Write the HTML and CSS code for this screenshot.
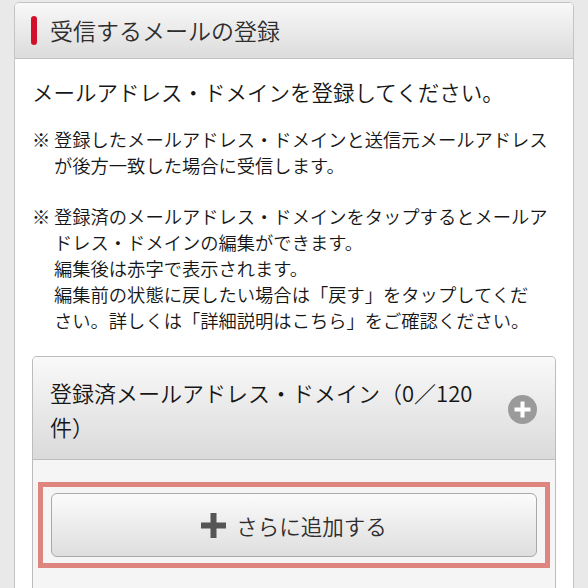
FILE: index.html
```html
<!DOCTYPE html>
<html lang="ja">
<head>
<meta charset="utf-8">
<title>受信するメールの登録</title>
<link rel="stylesheet" href="styles.css">
</head>
<body>
<div class="page">
  <section class="card">
    <header class="card-head">
      <span class="bar"></span>
      <h1 class="title">受信するメールの登録</h1>
    </header>
    <div class="card-body">
      <p class="lead">メールアドレス・ドメインを登録してください。</p>
      <div class="notes">
        <div class="note">
          <span class="mark">※</span>
          <p class="note-text">登録したメールアドレス・ドメインと送信元メールアドレスが後方一致した場合に受信します。</p>
        </div>
        <div class="note">
          <span class="mark">※</span>
          <p class="note-text">登録済のメールアドレス・ドメインをタップするとメールアドレス・ドメインの編集ができます。<br>編集後は赤字で表示されます。<br>編集前の状態に戻したい場合は「戻す」をタップしてくだ<br>さい。詳しくは「詳細説明はこちら」をご確認ください。</p>
        </div>
      </div>
      <div class="box">
        <div class="box-head">
          <span class="box-title">登録済メールアドレス・ドメイン（0／120件）</span>
          <svg class="circle-plus" width="29" height="29" viewBox="0 0 29 29" aria-hidden="true">
            <circle cx="14.5" cy="14.5" r="14.5" fill="#9a9a9a"/>
            <path d="M14.5 6.5v16M6.5 14.5h16" stroke="#fff" stroke-width="4"/>
          </svg>
        </div>
        <div class="box-body">
          <div class="highlight">
            <button class="btn" type="button">
              <svg class="btn-plus" width="25" height="25" viewBox="0 0 25 25" aria-hidden="true">
                <path d="M12.5 0v25M0 12.5h25" stroke="#555" stroke-width="6"/>
              </svg>
              <span>さらに追加する</span>
            </button>
          </div>
        </div>
      </div>
    </div>
  </section>
</div>
</body>
</html>
```

FILE: styles.css
```css
* { box-sizing: border-box; }

html, body {
  margin: 0;
  padding: 0;
  background: #e9e9e9;
  font-family: "Noto Sans CJK JP", "Noto Sans", sans-serif;
  font-weight: 350;
  color: #161616;
  overflow: hidden;
}

.page {
  padding: 2px 14px 0;
}

.card {
  background: #fff;
  border: 1px solid #c4c4c4;
  border-radius: 5px 5px 0 0;
}

.card-head {
  height: 56px;
  display: flex;
  align-items: center;
  gap: 13px;
  padding-left: 16px;
  background: linear-gradient(#f8f8f8, #dcdcdc);
  border-bottom: 1px solid #c2c2c2;
  border-radius: 4px 4px 0 0;
}

.bar {
  width: 6px;
  height: 29px;
  background: #d3102b;
  border-radius: 3px;
  flex: none;
}

.title {
  margin: 0;
  font-size: 23px;
  font-weight: 350;
  color: #2e2e2e;
  line-height: 1;
}

.card-body {
  padding: 18px 17px 0;
}

.lead {
  margin: 0;
  font-size: 21.5px;
  line-height: 30px;
}

.notes {
  margin-top: 19px;
  font-size: 18.3px;
  line-height: 26px;
}

.note {
  display: flex;
}

.note + .note {
  margin-top: 25px;
}

.mark {
  width: 22px;
  flex: none;
}

.note-text {
  margin: 0;
  flex: 1;
}

.box {
  margin-top: 23px;
  border: 1px solid #bcbcbc;
  border-bottom: none;
  border-radius: 5px 5px 0 0;
  background: #f5f5f5;
}

.box-head {
  display: flex;
  align-items: center;
  gap: 12px;
  padding: 18px 18px 16px 17px;
  background: linear-gradient(#f9f9f9, #dadada);
  border-bottom: 1px solid #bdbdbd;
  border-radius: 4px 4px 0 0;
}

.box-title {
  flex: 1;
  font-size: 22px;
  line-height: 34px;
}

.circle-plus {
  flex: none;
  display: block;
}

.box-body {
  padding: 22px 5px 40px;
}

.highlight {
  border: 5px solid #de8580;
  padding: 6px 8px;
}

.btn {
  width: 100%;
  height: 64px;
  display: flex;
  align-items: center;
  justify-content: center;
  gap: 10px;
  border: 1px solid #a9a9a9;
  border-radius: 6px;
  background: linear-gradient(#fbfbfb, #dedede);
  font-family: inherit;
  font-weight: 350;
  font-size: 21.5px;
  color: #2e2e2e;
  padding: 0;
}

.btn-plus {
  display: block;
  flex: none;
}
```
